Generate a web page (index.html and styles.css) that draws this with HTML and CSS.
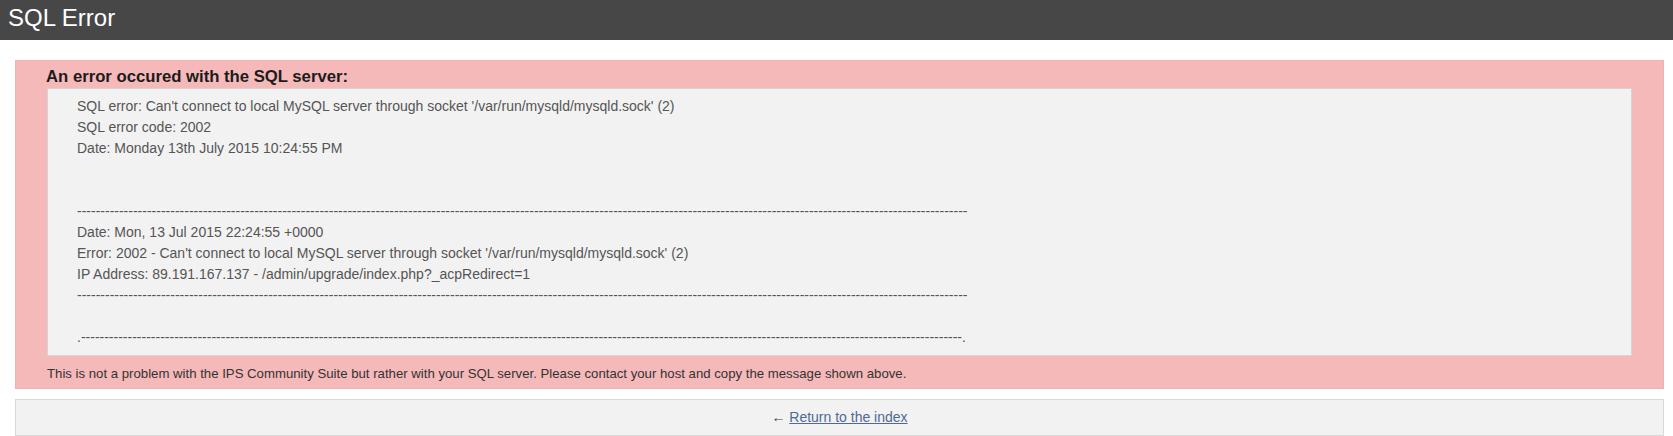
FILE: index.html
```html
<!DOCTYPE html>
<html lang="en">

<head>
    <meta charset="UTF-8">
    <title>SQL Error</title>
    <link rel="stylesheet" href="styles.css">
</head>

<body>
    <header class="top-bar">
        <h1>SQL Error</h1>
    </header>

    <main class="wrapper">
        <div class="error-box">
            <h2>An error occured with the SQL server:</h2>
            <div class="details">
                SQL error: Can't connect to local MySQL server through socket '/var/run/mysqld/mysqld.sock' (2)<br>
                SQL error code: 2002<br>
                Date: Monday 13th July 2015 10:24:55 PM<br>
                <br>
                <br>
                <span class="rule">-----------------------------------------------------------------------------------------------------------------------------------------------------------------------------------------------</span><br>
                Date: Mon, 13 Jul 2015 22:24:55 +0000<br>
                Error: 2002 - Can't connect to local MySQL server through socket '/var/run/mysqld/mysqld.sock' (2)<br>
                IP Address: 89.191.167.137 - /admin/upgrade/index.php?_acpRedirect=1<br>
                <span class="rule">-----------------------------------------------------------------------------------------------------------------------------------------------------------------------------------------------</span><br>
                <br>
                <span class="rule">.---------------------------------------------------------------------------------------------------------------------------------------------------------------------------------------------.</span>
            </div>
            <p class="note">This is not a problem with the IPS Community Suite but rather with your SQL server. Please contact your host and copy the message shown above.</p>
        </div>

        <div class="back">
            &larr; <a href="#">Return to the index</a>
        </div>
    </main>
</body>

</html>
```

FILE: styles.css
```css
body {
    margin: 0;
    background-color: #fff;
    font-family: "Liberation Sans", Arial, sans-serif;
    font-size: 14px;
    color: #333;
}

.top-bar {
    background-color: #474747;
    padding: 0 8px 4px;
}

.top-bar h1 {
    margin: 0;
    font-size: 24px;
    font-weight: normal;
    line-height: 36px;
    color: #fff;
}

.wrapper {
    margin: 20px 9px 0 15px;
}

.error-box {
    background-color: #f5b9b9;
    border: 1px solid #eeb2b2;
    padding: 5px 31px 5px;
}

.error-box h2 {
    margin: 0 0 0 -1px;
    font-size: 16.7px;
    line-height: 22px;
    color: #1c1c1c;
}

.details {
    background-color: #f2f2f2;
    border: 1px solid #d9d4d4;
    padding: 7px 29px;
    line-height: 21px;
    color: #555;
    white-space: nowrap;
}

.rule {
    color: #555;
}

.note {
    margin: 8px 0 0;
    font-size: 13.2px;
    line-height: 19px;
    color: #333;
}

.back {
    margin-top: 10px;
    background-color: #f2f2f2;
    border: 1px solid #d9d9d9;
    padding: 7px 0;
    line-height: 21px;
    text-align: center;
    color: #444;
}

.back a {
    color: #4f6a94;
}
```
